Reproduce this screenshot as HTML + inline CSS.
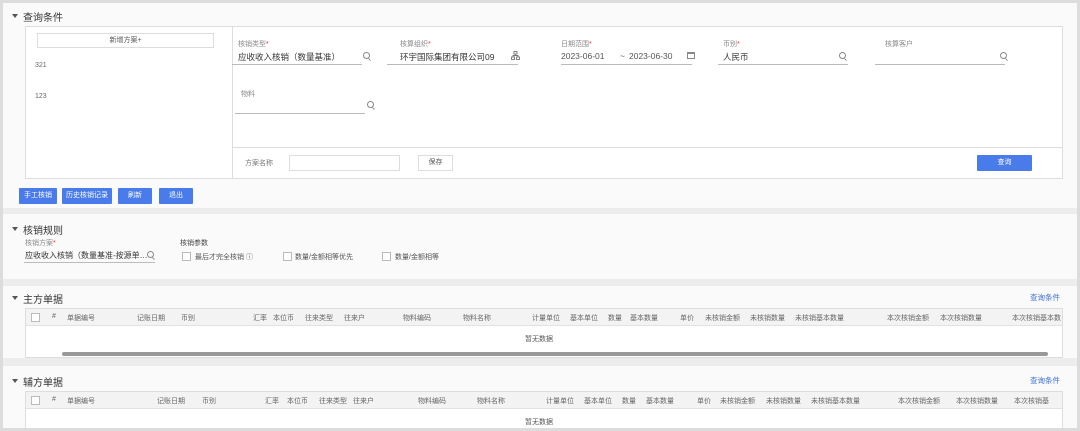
<!DOCTYPE html>
<html><head><meta charset="utf-8">
<style>
*{box-sizing:border-box;margin:0;padding:0}
body{width:1080px;height:431px;background:#dcdcdc;font-family:"Liberation Sans","Noto Sans CJK SC",sans-serif;color:#555;font-size:7px;position:relative;overflow:hidden}
.a{position:absolute;white-space:nowrap}
.sec{position:absolute;left:3px;right:3px;background:#fafafa}
.gap{position:absolute;left:3px;right:3px;background:#ececec}
.t{font-size:10px;color:#333}
.tri{position:absolute;width:0;height:0;border-left:3px solid transparent;border-right:3px solid transparent;border-top:4px solid #555}
.lbl{color:#888;font-size:7px}
.req::after{content:"*";color:#e33}
.val{color:#333;font-size:8.5px}
.ul{position:absolute;height:1px;background:#bbb}
.btn{position:absolute;background:#4a7bea;color:#fff;font-size:7px;text-align:center;line-height:16px;border-radius:1px}
.box{position:absolute;border:1px solid #ddd}
.srch{position:absolute;width:7px;height:7px;border:1px solid #888;border-radius:50%}
.srch::after{content:"";position:absolute;width:3px;height:1px;background:#888;transform:rotate(45deg);left:4px;top:6px}
.cb{position:absolute;width:9px;height:9px;border:1px solid #bbb;background:#fff}
.th{position:absolute;color:#666;font-size:7px}
.link{color:#3a6fd8;font-size:7.5px}
</style></head><body>
<div class="sec" style="top:3px;height:205px"></div>
<div class="gap" style="top:208px;height:6px"></div>
<div class="sec" style="top:214px;height:65px"></div>
<div class="gap" style="top:279px;height:7px"></div>
<div class="sec" style="top:286px;height:72px"></div>
<div class="gap" style="top:358px;height:8px"></div>
<div class="sec" style="top:366px;height:62px"></div>

<!-- section 1 -->
<div class="tri" style="left:12px;top:14px"></div>
<div class="a t" style="left:23px;top:9px">查询条件</div>
<div class="box" style="left:25px;top:26px;width:1038px;height:153px;background:#fff"></div>
<div class="a" style="left:232px;top:26px;width:1px;height:153px;background:#ddd"></div>
<div class="a" style="left:232px;top:147px;width:830px;height:1px;background:#ddd"></div>
<div class="box" style="left:37px;top:33px;width:177px;height:15px;line-height:13px;text-align:center;color:#555;background:#fff">新增方案+</div>
<div class="a" style="left:35px;top:62px;color:#666">321</div>
<div class="a" style="left:35px;top:93px;color:#666">123</div>

<div class="a lbl req" style="left:238px;top:39px">核销类型</div>
<div class="a val" style="left:238px;top:51px">应收收入核销（数量基准）</div>
<div class="srch" style="left:363px;top:52px"></div>
<div class="ul" style="left:232px;top:64px;width:130px"></div>

<div class="a lbl req" style="left:400px;top:39px">核算组织</div>
<div class="a val" style="left:400px;top:51px">环宇国际集团有限公司09</div>
<svg class="a" style="left:511px;top:51px" width="9" height="9" viewBox="0 0 9 9" fill="none" stroke="#777" stroke-width="0.9"><rect x="3" y="0.5" width="3" height="2.5"/><rect x="0.5" y="6" width="3" height="2.5"/><rect x="5.5" y="6" width="3" height="2.5"/><path d="M4.5 3v1.5M2 6V4.5h5V6"/></svg>
<div class="ul" style="left:387px;top:64px;width:131px"></div>

<div class="a lbl req" style="left:561px;top:39px">日期范围</div>
<div class="a val" style="left:561px;top:51px;color:#555">2023-06-01</div>
<div class="a val" style="left:620px;top:51px;color:#555">~</div>
<div class="a val" style="left:629px;top:51px;color:#555">2023-06-30</div>
<div class="a" style="left:687px;top:52px;width:8px;height:7px;border:1px solid #888;border-top-width:2px"></div>
<div class="ul" style="left:561px;top:64px;width:131px"></div>

<div class="a lbl req" style="left:723px;top:39px">币别</div>
<div class="a val" style="left:723px;top:51px">人民币</div>
<div class="srch" style="left:839px;top:52px"></div>
<div class="ul" style="left:718px;top:64px;width:130px"></div>

<div class="a lbl" style="left:885px;top:39px">核算客户</div>
<div class="srch" style="left:1000px;top:52px"></div>
<div class="ul" style="left:875px;top:64px;width:130px"></div>

<div class="a lbl" style="left:241px;top:89px">物料</div>
<div class="srch" style="left:367px;top:101px"></div>
<div class="ul" style="left:235px;top:113px;width:130px"></div>

<div class="a lbl" style="left:245px;top:158px;color:#777">方案名称</div>
<div class="box" style="left:289px;top:155px;width:111px;height:16px;background:#fff"></div>
<div class="box" style="left:418px;top:155px;width:35px;height:16px;background:#fff;text-align:center;line-height:14px;color:#555">保存</div>
<div class="btn" style="left:977px;top:155px;width:55px;height:16px;line-height:16px">查询</div>

<div class="btn" style="left:19px;top:188px;width:38px;height:16px">手工核销</div>
<div class="btn" style="left:62px;top:188px;width:50px;height:16px">历史核销记录</div>
<div class="btn" style="left:118px;top:188px;width:34px;height:16px">刷新</div>
<div class="btn" style="left:159px;top:188px;width:34px;height:16px">退出</div>

<!-- section 2 -->
<div class="tri" style="left:12px;top:227px"></div>
<div class="a t" style="left:23px;top:222px">核销规则</div>
<div class="a lbl req" style="left:25px;top:238px">核销方案</div>
<div class="a val" style="left:25px;top:250px;font-size:8px">应收收入核销（数量基准-按源单…</div>
<div class="srch" style="left:147px;top:251px"></div>
<div class="ul" style="left:24px;top:262px;width:131px"></div>
<div class="a" style="left:180px;top:238px;color:#444">核销参数</div>
<div class="cb" style="left:182px;top:252px"></div>
<div class="a" style="left:195px;top:252px;color:#555">最后才完全核销 ⓘ</div>
<div class="cb" style="left:283px;top:252px"></div>
<div class="a" style="left:295px;top:252px;color:#555">数量/金额相等优先</div>
<div class="cb" style="left:382px;top:252px"></div>
<div class="a" style="left:395px;top:252px;color:#555">数量/金额相等</div>

<!-- section 3 -->
<div class="tri" style="left:12px;top:296px"></div>
<div class="a t" style="left:23px;top:291px">主方单据</div>
<div class="a link" style="left:1030px;top:292px">查询条件</div>
<div class="box" style="left:25px;top:308px;width:1038px;height:50px;background:#fff"></div>
<div class="a" style="left:26px;top:309px;width:1036px;height:17px;background:#f3f3f3;border-bottom:1px solid #e2e2e2"></div>
<div class="cb" style="left:31px;top:313px"></div>
<div class="th" style="left:52px;top:313px">#</div>
<div class="th" style="left:67px;top:313px">单据编号</div>
<div class="th" style="left:137px;top:313px">记账日期</div>
<div class="th" style="left:181px;top:313px">币别</div>
<div class="th" style="left:253px;top:313px">汇率</div>
<div class="th" style="left:273px;top:313px">本位币</div>
<div class="th" style="left:305px;top:313px">往来类型</div>
<div class="th" style="left:344px;top:313px">往来户</div>
<div class="th" style="left:403px;top:313px">物料编码</div>
<div class="th" style="left:463px;top:313px">物料名称</div>
<div class="th" style="left:532px;top:313px">计量单位</div>
<div class="th" style="left:570px;top:313px">基本单位</div>
<div class="th" style="left:608px;top:313px">数量</div>
<div class="th" style="left:630px;top:313px">基本数量</div>
<div class="th" style="left:680px;top:313px">单价</div>
<div class="th" style="left:705px;top:313px">未核销金额</div>
<div class="th" style="left:750px;top:313px">未核销数量</div>
<div class="th" style="left:795px;top:313px">未核销基本数量</div>
<div class="th" style="left:887px;top:313px">本次核销金额</div>
<div class="th" style="left:940px;top:313px">本次核销数量</div>
<div class="th" style="left:1012px;top:313px">本次核销基本数</div>
<div class="a" style="left:525px;top:334px;color:#555">暂无数据</div>
<div class="a" style="left:62px;top:352px;width:986px;height:4px;background:#999;border-radius:2px"></div>

<!-- section 4 -->
<div class="tri" style="left:12px;top:379px"></div>
<div class="a t" style="left:23px;top:374px">辅方单据</div>
<div class="a link" style="left:1030px;top:375px">查询条件</div>
<div class="box" style="left:25px;top:391px;width:1038px;height:40px;background:#fff"></div>
<div class="a" style="left:26px;top:392px;width:1036px;height:17px;background:#f3f3f3;border-bottom:1px solid #e2e2e2"></div>
<div class="cb" style="left:31px;top:396px"></div>
<div class="th" style="left:52px;top:396px">#</div>
<div class="th" style="left:67px;top:396px">单据编号</div>
<div class="th" style="left:157px;top:396px">记账日期</div>
<div class="th" style="left:202px;top:396px">币别</div>
<div class="th" style="left:265px;top:396px">汇率</div>
<div class="th" style="left:287px;top:396px">本位币</div>
<div class="th" style="left:319px;top:396px">往来类型</div>
<div class="th" style="left:353px;top:396px">往来户</div>
<div class="th" style="left:418px;top:396px">物料编码</div>
<div class="th" style="left:477px;top:396px">物料名称</div>
<div class="th" style="left:546px;top:396px">计量单位</div>
<div class="th" style="left:584px;top:396px">基本单位</div>
<div class="th" style="left:622px;top:396px">数量</div>
<div class="th" style="left:646px;top:396px">基本数量</div>
<div class="th" style="left:697px;top:396px">单价</div>
<div class="th" style="left:720px;top:396px">未核销金额</div>
<div class="th" style="left:766px;top:396px">未核销数量</div>
<div class="th" style="left:811px;top:396px">未核销基本数量</div>
<div class="th" style="left:898px;top:396px">本次核销金额</div>
<div class="th" style="left:956px;top:396px">本次核销数量</div>
<div class="th" style="left:1014px;top:396px">本次核销基</div>
<div class="a" style="left:525px;top:417px;color:#555">暂无数据</div>
<div class="a" style="left:0;top:428px;width:1080px;height:3px;background:#dcdcdc"></div>
</body></html>
